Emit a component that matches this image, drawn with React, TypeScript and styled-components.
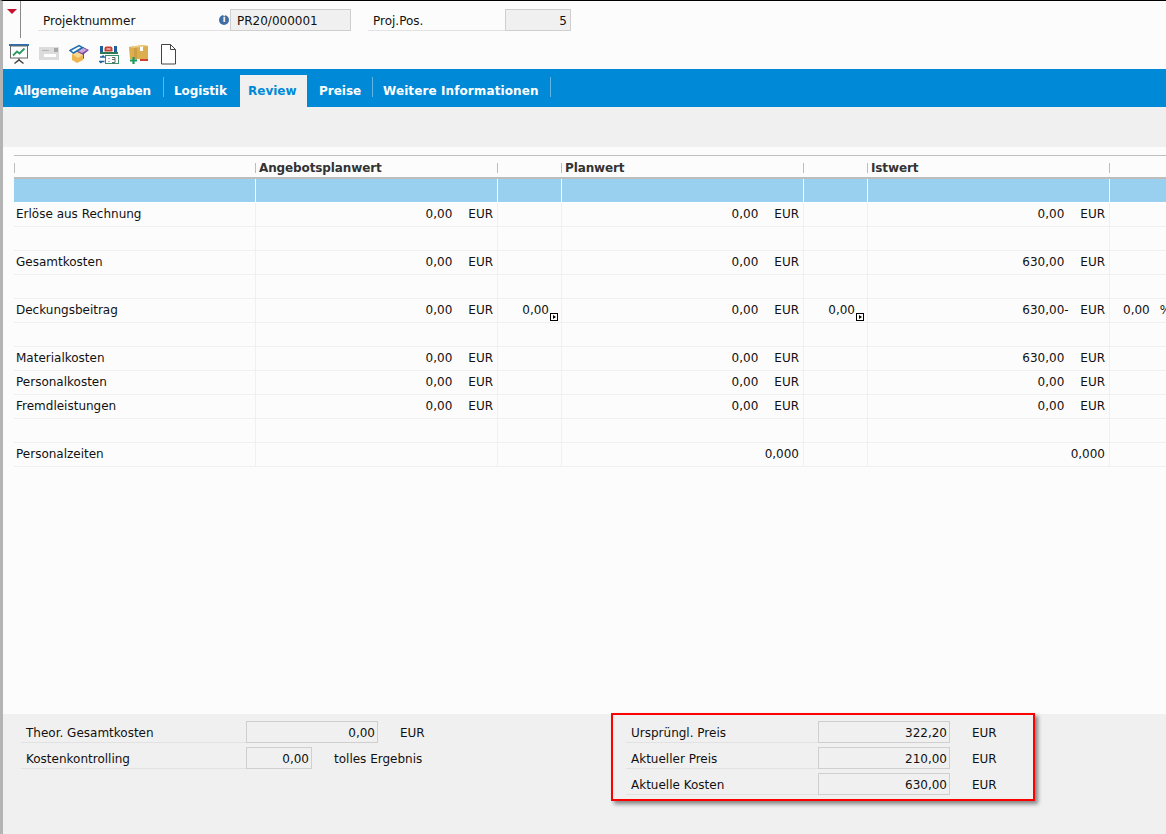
import React from 'react';
import styled, { createGlobalStyle } from 'styled-components';

const GlobalStyle = createGlobalStyle`
  html, body {
    margin: 0;
    padding: 0;
    background: #fcfcfc;
  }
  * {
    box-sizing: border-box;
  }
`;

const Page = styled.div`
  width: 1166px;
  height: 834px;
  display: flex;
  flex-direction: column;
  overflow: hidden;
  border-top: 1px solid #000;
  border-left: 3px solid #b4b4b4;
  background: #fcfcfc;
  color: #111;
  font-family: 'DejaVu Sans', sans-serif;
  font-size: 12px;
`;

const Header = styled.div`
  height: 40px;
  display: flex;
  align-items: flex-start;
`;

const CollapseHandle = styled.div`
  width: 18px;
  height: 37px;
  margin-right: 17px;
  padding: 8px 0 0 4px;
  border-right: 1px solid #8a8a8a;
`;

const RedArrow = styled.div`
  width: 0;
  height: 0;
  border-left: 5px solid transparent;
  border-right: 5px solid transparent;
  border-top: 5px solid #c8102e;
`;

const HeaderFields = styled.div`
  display: flex;
  gap: 17px;
  padding-top: 8px;
`;

const FieldRow = styled.div`
  display: flex;
  align-items: stretch;
  height: 22px;
`;

const FieldLabel = styled.div<{ $width: number }>`
  width: ${(p) => p.$width}px;
  display: flex;
  align-items: center;
  justify-content: space-between;
  padding: 2px 1px 0 5px;
  border-bottom: 1px solid #e2e2e2;
  white-space: nowrap;
`;

const InfoDot = styled.span`
  width: 10px;
  height: 10px;
  margin-top: -2px;
  display: flex;
  align-items: center;
  justify-content: center;
  border-radius: 50%;
  background: #3f6ea6;
  color: #fff;
  font-size: 8px;
  font-weight: 700;
  line-height: 10px;
`;

const ReadOnlyInput = styled.div<{ $width: number; $left?: boolean }>`
  width: ${(p) => p.$width}px;
  display: flex;
  align-items: center;
  justify-content: ${(p) => (p.$left ? 'flex-start' : 'flex-end')};
  padding: 2px 3px 0 6px;
  background: #f0f0f0;
  border: 1px solid #cfcfcf;
  white-space: nowrap;
`;

const Toolbar = styled.div`
  height: 28px;
  display: flex;
  align-items: center;
  gap: 10px;
  padding-left: 6px;
`;

const ToolIcon = styled.svg`
  width: 20px;
  height: 22px;
  flex: none;
`;

const TabBar = styled.div`
  height: 38px;
  display: flex;
  align-items: flex-end;
  background: #0089d7;
`;

const Tab = styled.div<{ $width: number; $pad: number; $spacing?: number; $active?: boolean; $divider?: boolean }>`
  position: relative;
  flex: none;
  width: ${(p) => p.$width}px;
  height: 32px;
  display: flex;
  align-items: center;
  padding-left: ${(p) => p.$pad}px;
  background: ${(p) => (p.$active ? '#f0f0f0' : 'transparent')};
  color: ${(p) => (p.$active ? '#0089d7' : '#fff')};
  font-weight: 700;
  letter-spacing: ${(p) => p.$spacing ?? 0}px;
  white-space: nowrap;

  ${(p) =>
    p.$divider &&
    `
    &::after {
      content: '';
      position: absolute;
      right: 0;
      top: 2px;
      height: 20px;
      width: 1px;
      background: #62b6e6;
    }
  `}
`;

const GrayBand = styled.div`
  height: 40px;
  background: #f0f0f0;
`;

const TableArea = styled.div`
  flex: 1;
  padding: 8px 0 0 11px;
`;

const COLUMNS = '242px 242px 64px 242px 64px 242px 70px';

const HeaderRow = styled.div`
  height: 24px;
  display: grid;
  grid-template-columns: ${COLUMNS};
  align-items: center;
  border-top: 1px solid #c0c0c0;
  border-bottom: 2px solid #bdbdbd;
`;

const HeaderCell = styled.div`
  height: 10px;
  margin-top: 2px;
  display: flex;
  align-items: center;
  padding-left: 3px;
  border-left: 1px solid #bdbdbd;
  color: #333;
  font-weight: 700;
  letter-spacing: -0.12px;
  white-space: nowrap;

  & + & {
    margin-left: -1px;
  }
`;

const Row = styled.div<{ $blue?: boolean }>`
  height: 24px;
  display: grid;
  grid-template-columns: ${COLUMNS};
  background: ${(p) => (p.$blue ? '#99d0ef' : 'transparent')};
  border-bottom: 1px solid ${(p) => (p.$blue ? '#fff' : '#f0f0f0')};
`;

const Cell = styled.div<{ $blue?: boolean }>`
  position: relative;
  display: flex;
  align-items: center;
  justify-content: flex-end;
  padding: 0 4px 2px 2px;
  border-right: 1px solid ${(p) => (p.$blue ? '#fff' : '#f0f0f0')};
  white-space: nowrap;
`;

const LabelCell = styled(Cell)`
  justify-content: flex-start;
`;

const Sign = styled.span`
  width: 5px;
  flex: none;
`;

const Unit = styled.span`
  margin-left: 11px;
`;

const SmallCell = styled(Cell)`
  padding-right: 12px;
`;

const ExpandBox = styled.span`
  position: absolute;
  right: 3px;
  bottom: 1px;
  width: 8px;
  height: 8px;
  display: flex;
  align-items: center;
  justify-content: center;
  background: #fff;
  border: 1px solid #000;

  &::after {
    content: '';
    border-left: 3px solid #000;
    border-top: 2px solid transparent;
    border-bottom: 2px solid transparent;
  }
`;

const PercentCell = styled(Cell)`
  justify-content: flex-start;
  padding-left: 13px;
`;

const Percent = styled.span`
  margin-left: 10px;
`;

const BottomPanel = styled.div`
  height: 120px;
  display: flex;
  align-items: flex-start;
  background: #f0f0f0;
`;

const FormGroup = styled.div`
  display: flex;
  flex-direction: column;
  gap: 4px;
`;

const LeftForm = styled(FormGroup)`
  width: 608px;
  padding: 7px 0 0 18px;
`;

const HighlightBox = styled(FormGroup)`
  width: 424px;
  height: 88px;
  margin-top: -1px;
  padding: 6px 0 0 13px;
  border: 2px solid #ff0000;
  box-shadow: 3px 3px 4px rgba(0, 0, 0, 0.45);
`;

const FormValue = styled(ReadOnlyInput)`
  padding-right: 2px;
`;

const FormUnit = styled.div<{ $gap: number }>`
  display: flex;
  align-items: center;
  margin-left: ${(p) => p.$gap}px;
  padding-top: 2px;
  white-space: nowrap;
`;

const PresentationIcon = () => (
  <ToolIcon viewBox="0 0 20 22">
    <rect x="0" y="0" width="20" height="2" fill="#2a70b0" />
    <rect x="1.500" y="2" width="17" height="12" fill="#fff" stroke="#666" />
    <path d="M4 11.500l4-4 2.500 2 5-5" fill="none" stroke="#2c9a62" strokeWidth="1.8" />
    <path d="M10 14.500v1.500M5.500 19.500l4.500-3.500 4.500 3.500" fill="none" stroke="#444" strokeWidth="1.500" />
  </ToolIcon>
);

const MailIcon = () => (
  <ToolIcon viewBox="0 0 20 22">
    <rect x="0" y="3" width="20" height="13" fill="#dcdcdc" />
    <rect x="3" y="6" width="7" height="1" fill="#b4b4b4" />
    <rect x="15" y="4" width="4" height="4" fill="#a8a8a8" />
    <rect x="5" y="10" width="12" height="3" fill="#fff" />
  </ToolIcon>
);

const BoxesIcon = () => (
  <ToolIcon viewBox="0 0 20 22">
    <path d="M8 7l6-4 6 3-5 4v5l-6-3z" fill="#7d4a9e" />
    <path d="M9 7l5-3 4 2-5 3z" fill="#c9a8dc" />
    <path d="M3 10l5-2 6 3v5l-6 3-5-3z" fill="#eeb44f" />
    <path d="M3 10l5-2 6 3-5 3z" fill="#f8d890" />
    <path d="M1 6.500l9-5 3.500 2-9 5.500z" fill="#fff" stroke="#1f6fb2" strokeWidth="1.500" />
  </ToolIcon>
);

const ExchangeIcon = () => (
  <ToolIcon viewBox="0 0 20 22">
    <rect x="1" y="2" width="3" height="6" fill="#1f5fa0" />
    <rect x="15" y="2" width="3" height="6" fill="#1f5fa0" />
    <path d="M6.500 6.500V4.500a1 1 0 0 1 1-1h4a1 1 0 0 1 1 1v2z" fill="none" stroke="#c8402e" strokeWidth="2" />
    <rect x="1" y="8" width="18" height="2" fill="#2b7a55" />
    <rect x="6.500" y="11.500" width="13" height="8" fill="#fff" stroke="#3c8f69" />
    <path d="M10 14v1M10 17v1M13 13.500h3v2h-3M16 15.500v3h-3" fill="none" stroke="#666" />
    <path d="M1 13h4l-1.500-1.500M5.500 17.500H1l1.500 1.500" fill="none" stroke="#1f5fa0" strokeWidth="1.600" />
  </ToolIcon>
);

const PackagesIcon = () => (
  <ToolIcon viewBox="0 0 20 22">
    <path d="M0 3l14-2 5 1v13H1z" fill="#dcae4e" />
    <path d="M0 3l14-2 5 1-14 2z" fill="#eccb80" />
    <path d="M5 4l3-.500v12H5z" fill="#c4923a" opacity="0.6" />
    <path d="M11 3l3-.500V7h-3z" fill="#fff" />
    <path d="M4.500 13v7M1 16.500h7" fill="none" stroke="#1d9a5a" strokeWidth="2.200" />
    <rect x="11" y="15" width="8" height="2" fill="#d0402e" />
  </ToolIcon>
);

const DocumentIcon = () => (
  <ToolIcon viewBox="0 0 20 22">
    <path d="M2.500.500h9l5 5v14.500h-14z" fill="#fff" stroke="#444" />
    <path d="M11.500.500v5h5" fill="none" stroke="#444" />
  </ToolIcon>
);

type Amount = { value: string; negative?: boolean };

type TableLine = {
  label: string;
  offer?: string;
  plan?: string;
  actual?: Amount;
  margin?: boolean;
  time?: boolean;
};

const lines: TableLine[] = [
  { label: 'Erlöse aus Rechnung', offer: '0,00', plan: '0,00', actual: { value: '0,00' } },
  { label: '' },
  { label: 'Gesamtkosten', offer: '0,00', plan: '0,00', actual: { value: '630,00' } },
  { label: '' },
  {
    label: 'Deckungsbeitrag',
    offer: '0,00',
    plan: '0,00',
    actual: { value: '630,00', negative: true },
    margin: true,
  },
  { label: '' },
  { label: 'Materialkosten', offer: '0,00', plan: '0,00', actual: { value: '630,00' } },
  { label: 'Personalkosten', offer: '0,00', plan: '0,00', actual: { value: '0,00' } },
  { label: 'Fremdleistungen', offer: '0,00', plan: '0,00', actual: { value: '0,00' } },
  { label: '' },
  { label: 'Personalzeiten', time: true },
];

const MoneyCell: React.FC<{ amount?: Amount }> = ({ amount }) => (
  <Cell>
    {amount && (
      <>
        {amount.value}
        <Sign>{amount.negative ? '-' : ''}</Sign>
        <Unit>EUR</Unit>
      </>
    )}
  </Cell>
);

const App: React.FC = () => {
  return (
    <Page>
      <GlobalStyle />
      <Header>
        <CollapseHandle>
          <RedArrow />
        </CollapseHandle>
        <HeaderFields>
          <FieldRow>
            <FieldLabel $width={192}>
              Projektnummer
              <InfoDot>i</InfoDot>
            </FieldLabel>
            <ReadOnlyInput $width={121} $left>
              PR20/000001
            </ReadOnlyInput>
          </FieldRow>
          <FieldRow>
            <FieldLabel $width={137}>Proj.Pos.</FieldLabel>
            <ReadOnlyInput $width={66}>5</ReadOnlyInput>
          </FieldRow>
        </HeaderFields>
      </Header>

      <Toolbar>
        <PresentationIcon />
        <MailIcon />
        <BoxesIcon />
        <ExchangeIcon />
        <PackagesIcon />
        <DocumentIcon />
      </Toolbar>

      <TabBar>
        <Tab $width={161} $pad={11} $spacing={-0.15} $divider>Allgemeine Angaben</Tab>
        <Tab $width={76} $pad={10} $spacing={-0.1}>Logistik</Tab>
        <Tab $width={67} $pad={8} $active>Review</Tab>
        <Tab $width={66} $pad={12} $divider>Preise</Tab>
        <Tab $width={178} $pad={10} $spacing={0.1} $divider>Weitere Informationen</Tab>
      </TabBar>

      <GrayBand />

      <TableArea>
        <HeaderRow>
          <HeaderCell />
          <HeaderCell>Angebotsplanwert</HeaderCell>
          <HeaderCell />
          <HeaderCell>Planwert</HeaderCell>
          <HeaderCell />
          <HeaderCell>Istwert</HeaderCell>
          <HeaderCell />
        </HeaderRow>
        <Row $blue>
          {Array.from({ length: 7 }).map((_, i) => (
            <Cell key={i} $blue />
          ))}
        </Row>
        {lines.map((line, i) => (
          <Row key={i}>
            <LabelCell>{line.label}</LabelCell>
            <MoneyCell amount={line.offer ? { value: line.offer } : undefined} />
            <SmallCell>
              {line.margin && (
                <>
                  0,00
                  <ExpandBox />
                </>
              )}
            </SmallCell>
            {line.time ? <Cell>0,000</Cell> : <MoneyCell amount={line.plan ? { value: line.plan } : undefined} />}
            <SmallCell>
              {line.margin && (
                <>
                  0,00
                  <ExpandBox />
                </>
              )}
            </SmallCell>
            {line.time ? <Cell>0,000</Cell> : <MoneyCell amount={line.actual} />}
            <PercentCell>
              {line.margin && (
                <>
                  0,00
                  <Percent>%</Percent>
                </>
              )}
            </PercentCell>
          </Row>
        ))}
      </TableArea>

      <BottomPanel>
        <LeftForm>
          <FieldRow>
            <FieldLabel $width={225}>Theor. Gesamtkosten</FieldLabel>
            <FormValue $width={132}>0,00</FormValue>
            <FormUnit $gap={22}>EUR</FormUnit>
          </FieldRow>
          <FieldRow>
            <FieldLabel $width={225}>Kostenkontrolling</FieldLabel>
            <FormValue $width={66}>0,00</FormValue>
            <FormUnit $gap={22}>tolles Ergebnis</FormUnit>
          </FieldRow>
        </LeftForm>
        <HighlightBox>
          <FieldRow>
            <FieldLabel $width={192}>Ursprüngl. Preis</FieldLabel>
            <FormValue $width={132}>322,20</FormValue>
            <FormUnit $gap={22}>EUR</FormUnit>
          </FieldRow>
          <FieldRow>
            <FieldLabel $width={192}>Aktueller Preis</FieldLabel>
            <FormValue $width={132}>210,00</FormValue>
            <FormUnit $gap={22}>EUR</FormUnit>
          </FieldRow>
          <FieldRow>
            <FieldLabel $width={192}>Aktuelle Kosten</FieldLabel>
            <FormValue $width={132}>630,00</FormValue>
            <FormUnit $gap={22}>EUR</FormUnit>
          </FieldRow>
        </HighlightBox>
      </BottomPanel>
    </Page>
  );
};

export default App;
